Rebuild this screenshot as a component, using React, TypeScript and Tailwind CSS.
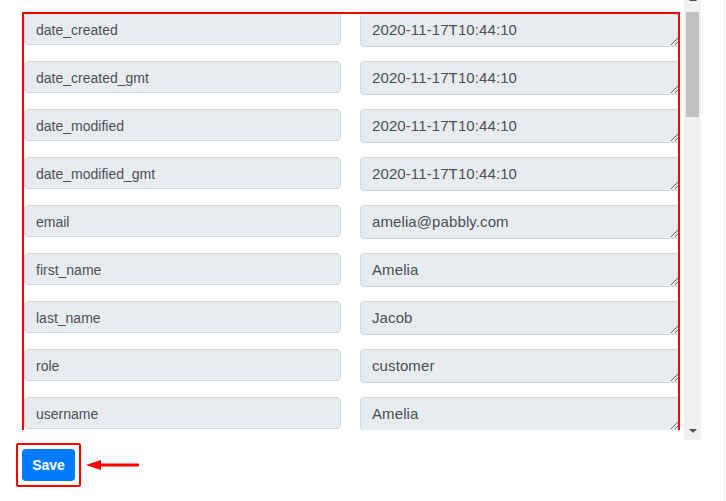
import React from "react";

const rows: [string, string][] = [
  ["date_created", "2020-11-17T10:44:10"],
  ["date_created_gmt", "2020-11-17T10:44:10"],
  ["date_modified", "2020-11-17T10:44:10"],
  ["date_modified_gmt", "2020-11-17T10:44:10"],
  ["email", "amelia@pabbly.com"],
  ["first_name", "Amelia"],
  ["last_name", "Jacob"],
  ["role", "customer"],
  ["username", "Amelia"],
];

export default function App() {
  return (
    <div className="flex w-[726px] h-[501px] bg-white overflow-hidden font-['Liberation_Sans',Arial,sans-serif]">
      <div className="flex flex-col w-[724px]">
        <div className="flex h-[440px]">
          <div className="relative w-[684px] h-[430px] overflow-hidden">
            <div className="grid grid-cols-[317px_320px] gap-x-[19px] auto-rows-[48px] pl-[24px] pt-[13px]">
              {rows.map(([k, v]) => (
                <React.Fragment key={k}>
                  <div className="h-[32px] flex items-center pt-[2px] px-[11px] bg-[#e9ecef] border border-[#ced4da] rounded-[4px] text-[14px] text-[#495057]">
                    {k}
                  </div>
                  <textarea
                    readOnly
                    rows={1}
                    value={v}
                    className="block w-[320px] h-[34px] px-[11px] pt-[5px] pb-[3px] leading-[22px] bg-[#e9ecef] border border-[#ced4da] rounded-[4px] text-[15px] tracking-[0.1px] text-[#495057] font-['Liberation_Sans',Arial,sans-serif] outline-none overflow-hidden resize"
                  />
                </React.Fragment>
              ))}
            </div>
            <div className="absolute left-[22px] top-[12px] w-[658px] h-[420px] border-2 border-[#ff0000] pointer-events-none" />
          </div>
          <div className="flex flex-col items-center w-[17px] h-[440px] bg-[#f1f1f1]">
            <div className="mt-[-3px] w-0 h-0 border-l-[4px] border-r-[4px] border-b-[4px] border-l-transparent border-r-transparent border-b-[#505050]" />
            <div className="mt-[11px] w-[13px] h-[105px] bg-[#c1c1c1]" />
            <div className="flex-1" />
            <div className="mb-[7px] w-0 h-0 border-l-[4px] border-r-[4px] border-t-[4px] border-l-transparent border-r-transparent border-t-[#505050]" />
          </div>
        </div>
        <div className="flex items-center pl-[16px] pt-[3px]">
          <div className="p-[4px] border-2 border-[#ff0000] rounded-[2px]">
            <button className="block w-[53px] h-[32px] rounded-[4px] bg-[#007bff] text-white text-[14px] font-bold font-['Liberation_Sans',Arial,sans-serif]">
              Save
            </button>
          </div>
          <svg className="ml-[5px]" width="54" height="12" viewBox="0 0 54 12">
            <polygon points="0,6 15,1 15,11" fill="#ff0000" />
            <rect x="14" y="4.5" width="39" height="3" fill="#ff0000" />
          </svg>
        </div>
      </div>
      <div className="w-px h-full bg-[#ececec]" />
    </div>
  );
}
